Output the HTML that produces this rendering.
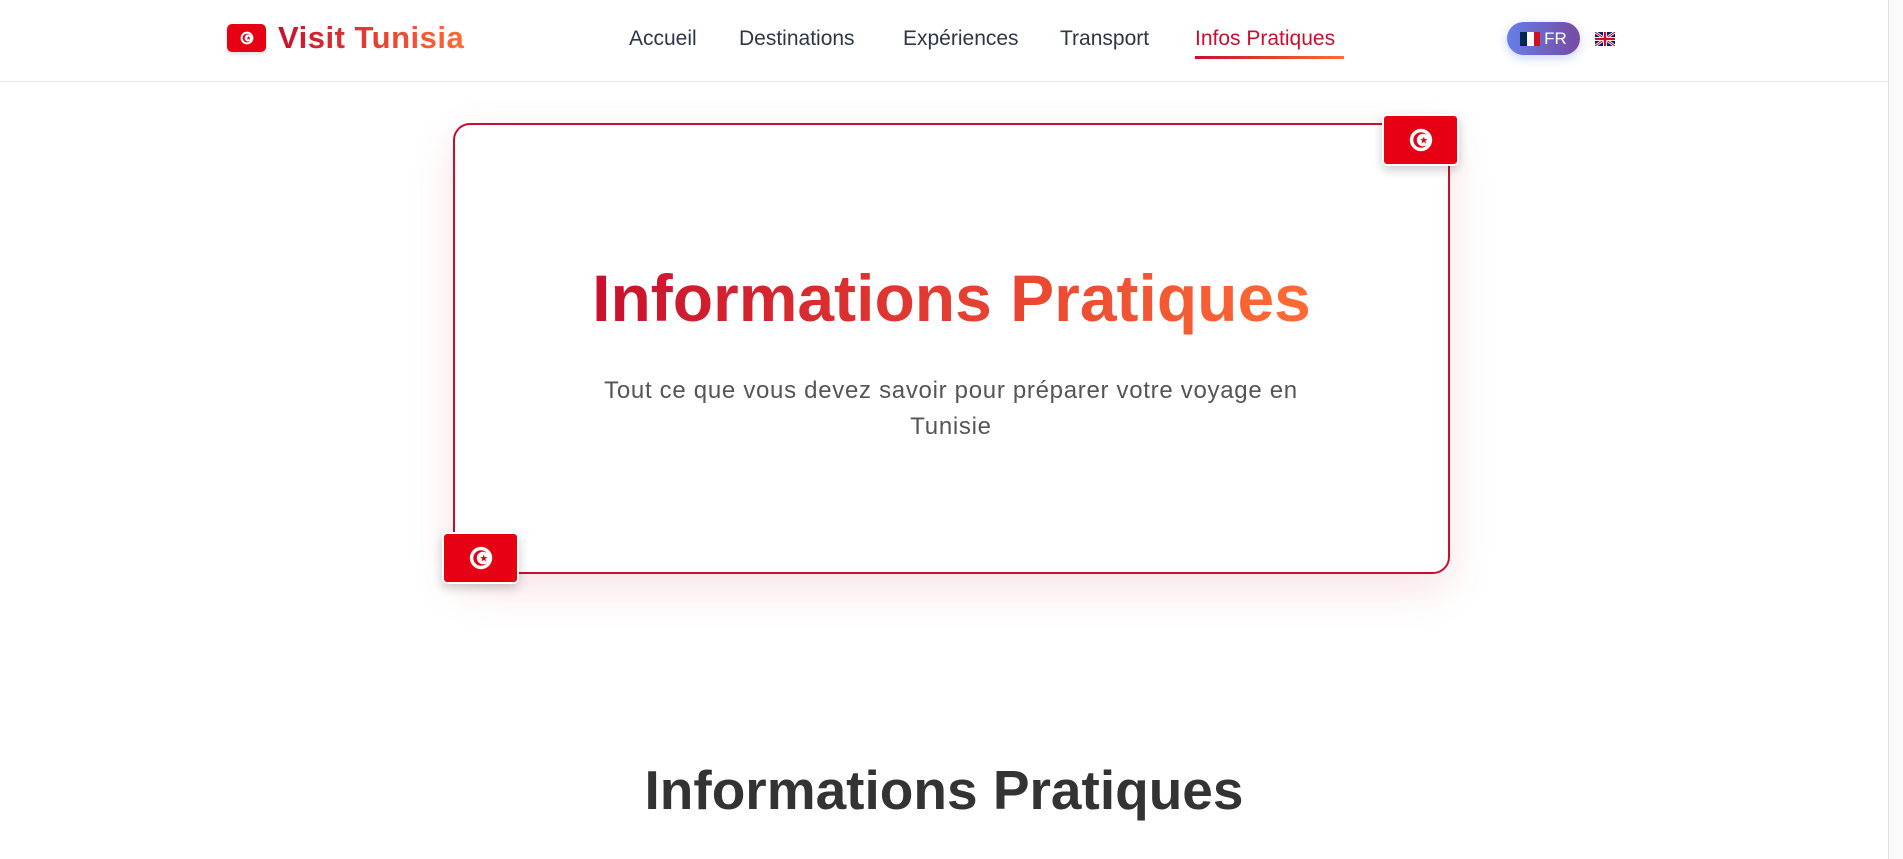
<!DOCTYPE html>
<html><head><meta charset="utf-8"><style>
*{margin:0;padding:0;box-sizing:border-box}
body{width:1903px;height:859px;overflow:hidden;background:#fff;font-family:"Liberation Sans",sans-serif;position:relative}
.nav{position:absolute;left:0;top:0;width:1888px;height:82px;border-bottom:1px solid #f5e6ea;background:#fff}
.flag{position:absolute;background:#e70013;border-radius:5px;display:flex;align-items:center;justify-content:center}
.grad{background:linear-gradient(90deg,#c8102e,#ff6b35);-webkit-background-clip:text;background-clip:text;color:transparent}
.link{position:absolute;top:27px;font-size:21px;color:#2d3748}
.scroll{position:absolute;right:0;top:0;width:15px;height:859px;background:#fafafa;border-left:1px solid #e2e2e2}
</style></head><body>
<div class="nav">
  <div class="flag" style="left:227px;top:24px;width:39px;height:28px;box-shadow:0 2px 5px rgba(0,0,0,.15)">
    <svg width="16" height="16" viewBox="0 0 20 20"><circle cx="10" cy="10" r="8" fill="#fff"/><circle cx="10" cy="10" r="5.5" fill="#e70013"/><circle cx="11.5" cy="10" r="4.5" fill="#fff"/><polygon points="12,7.5 12.7,9.4 14.6,9.4 13.1,10.6 13.6,12.5 12,11.3 10.4,12.5 10.9,10.6 9.4,9.4 11.3,9.4" fill="#e70013"/></svg>
  </div>
  <div class="grad" style="position:absolute;left:278px;top:20px;font-size:31px;font-weight:bold;letter-spacing:0.5px">Visit Tunisia</div>
  <div class="link" style="left:629px">Accueil</div>
  <div class="link" style="left:739px">Destinations</div>
  <div class="link" style="left:903px">Expériences</div>
  <div class="link" style="left:1060px">Transport</div>
  <div class="link" style="left:1195px;color:#c8102e">Infos Pratiques</div>
  <div style="position:absolute;left:1195px;top:56px;width:149px;height:3px;background:linear-gradient(90deg,#c8102e,#ff6b35)"></div>
  <div style="position:absolute;left:1507px;top:22px;width:73px;height:33px;border-radius:17px;background:linear-gradient(90deg,#667eea,#764ba2);box-shadow:0 3px 10px rgba(102,126,234,.35);color:#fff;font-size:17px;display:flex;align-items:center;justify-content:center;gap:4px">
    <span style="display:inline-flex;width:20px;height:14px"><i style="flex:1;background:#002654"></i><i style="flex:1;background:#fff"></i><i style="flex:1;background:#ce1126"></i></span>FR</div>
  <svg style="position:absolute;left:1595px;top:32px" width="20" height="14" viewBox="0 0 60 42"><rect width="60" height="42" fill="#012169"/><path d="M0 0L60 42M60 0L0 42" stroke="#fff" stroke-width="8"/><path d="M0 0L60 42M60 0L0 42" stroke="#c8102e" stroke-width="3"/><path d="M30 0V42M0 21H60" stroke="#fff" stroke-width="12"/><path d="M30 0V42M0 21H60" stroke="#c8102e" stroke-width="7"/></svg>
</div>
<div style="position:absolute;left:453px;top:123px;width:997px;height:451px;border:2.5px solid #c8102e;border-radius:17px;background:#fff;box-shadow:0 15px 45px rgba(200,16,46,.12)"></div>
<div class="flag" style="left:1382px;top:114px;width:77px;height:52px;border:2px solid #fff;box-shadow:0 4px 10px rgba(0,0,0,.2)">
  <svg width="28" height="28" viewBox="0 0 20 20"><circle cx="10" cy="10" r="8" fill="#fff"/><circle cx="10" cy="10" r="5.5" fill="#e70013"/><circle cx="11.5" cy="10" r="4.5" fill="#fff"/><polygon points="12,7.5 12.7,9.4 14.6,9.4 13.1,10.6 13.6,12.5 12,11.3 10.4,12.5 10.9,10.6 9.4,9.4 11.3,9.4" fill="#e70013"/></svg></div>
<div class="flag" style="left:442px;top:532px;width:77px;height:52px;border:2px solid #fff;box-shadow:0 4px 10px rgba(0,0,0,.2)">
  <svg width="28" height="28" viewBox="0 0 20 20"><circle cx="10" cy="10" r="8" fill="#fff"/><circle cx="10" cy="10" r="5.5" fill="#e70013"/><circle cx="11.5" cy="10" r="4.5" fill="#fff"/><polygon points="12,7.5 12.7,9.4 14.6,9.4 13.1,10.6 13.6,12.5 12,11.3 10.4,12.5 10.9,10.6 9.4,9.4 11.3,9.4" fill="#e70013"/></svg></div>
<div style="position:absolute;left:453px;width:997px;top:258px;text-align:center;font-size:66px;font-weight:bold;line-height:80px"><span class="grad">Informations Pratiques</span></div>
<div style="position:absolute;left:571px;width:760px;top:373px;text-align:center;font-size:24px;letter-spacing:0.7px;line-height:36px;color:#555">Tout ce que vous devez savoir pour préparer votre voyage en Tunisie</div>
<div style="position:absolute;left:0;width:1888px;top:755px;text-align:center;font-size:55px;font-weight:bold;color:#333;line-height:70px">Informations Pratiques</div>
<div class="scroll"></div>
</body></html>
